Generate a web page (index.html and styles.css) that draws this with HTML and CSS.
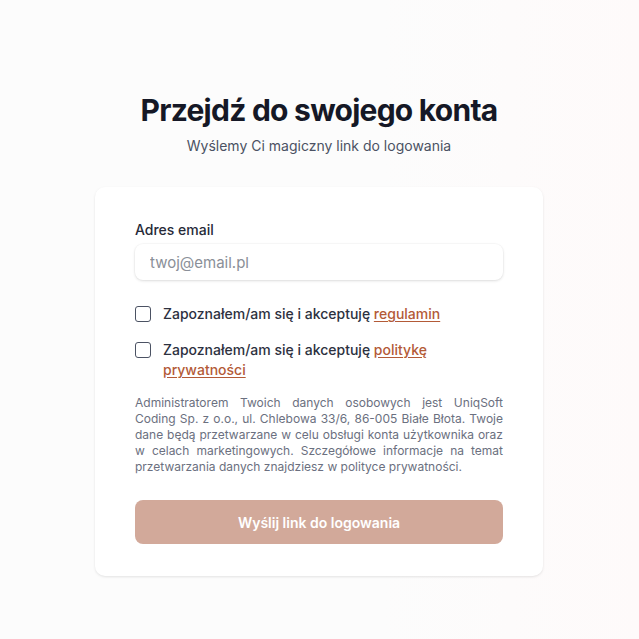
FILE: index.html
```html
<!DOCTYPE html>
<html lang="pl">
<head>
  <meta charset="utf-8">
  <link rel="stylesheet" href="styles.css">
</head>
<body>
  <main class="page">
    <header class="intro">
      <h1 class="title">Przejdź do swojego konta</h1>
      <p class="subtitle">Wyślemy Ci magiczny link do logowania</p>
    </header>

    <form class="card">
      <div class="field">
        <label for="email" class="field-label">Adres email</label>
        <input type="email" id="email" class="field-input" placeholder="twoj@email.pl">
      </div>

      <div class="consents">
        <label class="consent">
          <input type="checkbox" class="consent-box">
          <span class="consent-text">Zapoznałem/am się i akceptuję <a href="#" class="link">regulamin</a></span>
        </label>
        <label class="consent">
          <input type="checkbox" class="consent-box">
          <span class="consent-text">Zapoznałem/am się i akceptuję <a href="#" class="link">politykę prywatności</a></span>
        </label>
      </div>

      <p class="notice">Administratorem Twoich danych osobowych jest UniqSoft Coding Sp. z o.o., ul. Chlebowa 33/6, 86-005 Białe Błota. Twoje dane będą przetwarzane w celu obsługi konta użytkownika oraz w celach marketingowych. Szczegółowe informacje na temat przetwarzania danych znajdziesz w polityce prywatności.</p>

      <button type="button" class="submit">Wyślij link do logowania</button>
    </form>
  </main>
</body>
</html>
```

FILE: styles.css
```css
body {
  margin: 0;
  min-height: 100vh;
  background: linear-gradient(90deg, #fcfcfc 0%, #fcfcfc 60%, #fefafa 100%);
  font-family: Inter, "Noto Sans", sans-serif;
  color: #111827;
}

.page {
  display: flex;
  flex-direction: column;
  align-items: center;
  padding: 92px 1px 0 0;
}

.intro {
  text-align: center;
}

.title {
  margin: 0;
  font-size: 30px;
  line-height: 36px;
  font-weight: 700;
  letter-spacing: -0.75px;
  color: #151826;
}

.subtitle {
  margin: 8px 0 0;
  font-size: 14px;
  line-height: 20px;
  color: #4b5263;
}

.card {
  box-sizing: border-box;
  width: 448px;
  margin-top: 31px;
  padding: 33px 40px 32px;
  background: #ffffff;
  border-radius: 10px;
  box-shadow: 0 1px 3px rgba(0, 0, 0, 0.08), 0 1px 2px rgba(0, 0, 0, 0.03);
}

.field {
  display: flex;
  flex-direction: column;
  gap: 4px;
}

.field-label {
  font-size: 14px;
  line-height: 20px;
  font-weight: 500;
  color: #262a38;
}

.field-input {
  height: 36px;
  padding: 0 15px;
  border: none;
  border-radius: 8px;
  background: #ffffff;
  box-shadow: 0 1px 3px rgba(0, 0, 0, 0.12), 0 0 0 1px rgba(0, 0, 0, 0.02);
  font-family: inherit;
  font-size: 15px;
  color: #111827;
  outline: none;
}

.field-input::placeholder {
  color: #8a8f98;
}

.consents {
  display: flex;
  flex-direction: column;
  gap: 16px;
  margin-top: 24px;
}

.consent {
  display: flex;
  align-items: flex-start;
  gap: 12px;
  cursor: pointer;
}

.consent-box {
  appearance: none;
  flex: none;
  width: 16px;
  height: 16px;
  margin: 2px 0 0;
  border: 1.5px solid #4b5263;
  border-radius: 3px;
  background: #ffffff;
}

.consent-text {
  font-size: 14px;
  line-height: 20px;
  font-weight: 500;
  color: #2d3140;
}

.link {
  color: #b35a37;
  text-decoration: underline;
  text-underline-offset: 2px;
}

.notice {
  margin: 15px 0 0;
  font-size: 12px;
  line-height: 16px;
  text-align: justify;
  color: #6b7080;
}

.submit {
  width: 100%;
  height: 44px;
  margin-top: 25px;
  border: none;
  border-radius: 8px;
  background: #d2a99a;
  font-family: inherit;
  font-size: 14px;
  font-weight: 600;
  color: #ffffff;
  cursor: pointer;
}
```
